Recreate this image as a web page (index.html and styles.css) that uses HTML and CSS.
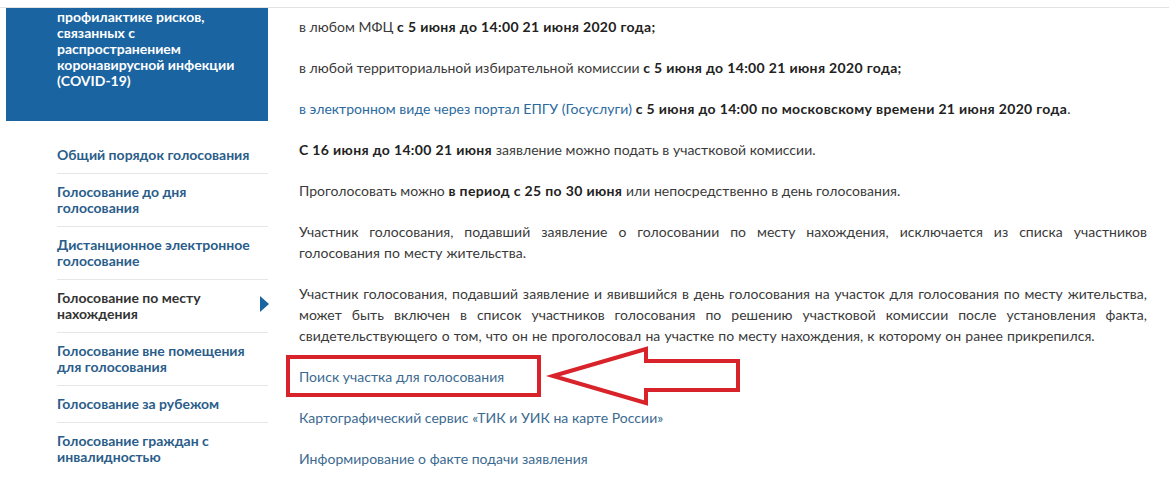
FILE: index.html
```html
<!DOCTYPE html>
<html lang="ru">
<head>
<meta charset="utf-8">
<link rel="stylesheet" href="styles.css">
</head>
<body>
<div class="topline"></div>
<div class="page">
  <aside class="sidebar">
    <div class="banner">профилактике рисков, связанных с распространением коронавирусной инфекции (COVID-19)</div>
    <ul class="menu">
      <li><a href="#">Общий порядок голосования</a></li>
      <li><a href="#">Голосование до дня голосования</a></li>
      <li><a href="#">Дистанционное электронное голосование</a></li>
      <li class="active"><a href="#">Голосование по месту нахождения</a></li>
      <li><a href="#">Голосование вне помещения для голосования</a></li>
      <li><a href="#">Голосование за рубежом</a></li>
      <li><a href="#">Голосование граждан с инвалидностью</a></li>
    </ul>
  </aside>
  <main class="content">
    <p>в любом МФЦ <b>с 5 июня до 14:00 21 июня 2020 года;</b></p>
    <p>в любой территориальной избирательной комиссии <b>с 5 июня до 14:00 21 июня 2020 года;</b></p>
    <p><a href="#" class="inline">в электронном виде через портал ЕПГУ (Госуслуги)</a> <b>с 5 июня до 14:00 по московскому времени 21 июня 2020 года</b>.</p>
    <p><b>С 16 июня до 14:00 21 июня</b> заявление можно подать в участковой комиссии.</p>
    <p>Проголосовать можно <b>в период с 25 по 30 июня</b> или непосредственно в день голосования.</p>
    <p class="just">Участник голосования, подавший заявление о голосовании по месту нахождения, исключается из списка участников голосования по месту жительства.</p>
    <p class="just">Участник голосования, подавший заявление и явившийся в день голосования на участок для голосования по месту жительства, может быть включен в список участников голосования по решению участковой комиссии после установления факта, свидетельствующего о том, что он не проголосовал на участке по месту нахождения, к которому он ранее прикрепился.</p>
    <p><a href="#" class="link">Поиск участка для голосования</a></p>
    <p><a href="#" class="link">Картографический сервис «ТИК и УИК на карте России»</a></p>
    <p><a href="#" class="link">Информирование о факте подачи заявления</a></p>
  </main>
</div>
<svg class="annot" width="1169" height="480" viewBox="0 0 1169 480">
  <rect x="288" y="357" width="251" height="38" fill="none" stroke="#d8232a" stroke-width="4"/>
  <polygon points="553,376 646,349 646,361 738,361 738,390 646,390 646,403" fill="#fff" stroke="#d8232a" stroke-width="4" stroke-linejoin="miter"/>
</svg>
</body>
</html>
```
FILE: styles.css
```css
html, body {
  margin: 0;
  padding: 0;
  background: #fff;
}
body {
  font-family: Lato, "Noto Sans", sans-serif;
  color: #3a3a3a;
  width: 1169px;
  height: 480px;
  overflow: hidden;
  position: relative;
}
.topline {
  height: 7px;
  border-bottom: 1px solid #e2e2e2;
}
.page {
  display: flex;
  align-items: flex-start;
}
.sidebar {
  width: 262px;
  margin-left: 6px;
  flex: none;
}
.banner {
  background: #1a64a1;
  color: #fff;
  font-weight: bold;
  font-size: 14px;
  line-height: 16px;
  padding: 1px 20px 0 51px;
  height: 113px;
  box-sizing: border-box;
}
.menu {
  list-style: none;
  margin: 16px 0 0 51px;
  padding: 0;
}
.menu li {
  border-bottom: 1px solid #e6e6e6;
  padding: 10px 8px 10px 0;
  font-size: 14px;
  line-height: 16px;
  font-weight: bold;
  position: relative;
}
.menu li:last-child {
  border-bottom: none;
}
.menu a {
  color: #2a5d8a;
  text-decoration: none;
}
.menu li.active a {
  color: #333;
}
.menu li.active::after {
  content: "";
  position: absolute;
  right: -1px;
  top: 16px;
  border-left: 9px solid #1a64a1;
  border-top: 8px solid transparent;
  border-bottom: 8px solid transparent;
}
.content {
  margin-left: 31px;
  width: 848px;
  padding-top: 8px;
  font-size: 14px;
  line-height: 21px;
  letter-spacing: 0.03px;
}
.content p {
  margin: 0 0 20px 0;
}
.content p.just {
  text-align: justify;
  word-spacing: 0.5px;
}
.content b {
  color: #222;
  letter-spacing: 0.35px;
}
.content a.inline {
  color: #2b6aa0;
  text-decoration: none;
}
.content a.link {
  color: #3b6a90;
  text-decoration: none;
}
.annot {
  position: absolute;
  left: 0;
  top: 0;
  pointer-events: none;
}
```
